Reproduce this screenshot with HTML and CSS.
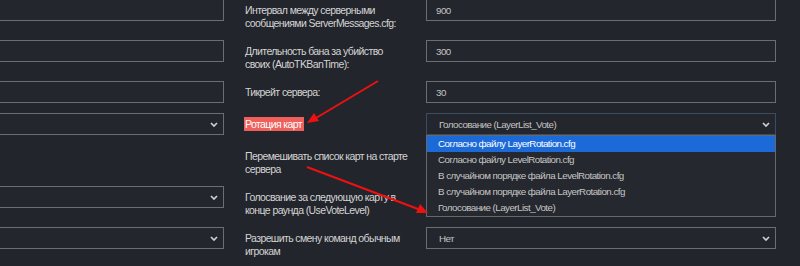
FILE: index.html
```html
<!DOCTYPE html>
<html lang="ru">
<head>
<meta charset="utf-8">
<title>Настройки сервера</title>
<link rel="stylesheet" href="styles.css">
</head>
<body>
<div class="page">
  <div class="form">
    <div class="row">
      <div class="cell-left"><div class="field"></div></div>
      <div class="label">Интервал между серверными<br>сообщениями ServerMessages.cfg:</div>
      <div class="cell-right"><div class="field">900</div></div>
    </div>
    <div class="row">
      <div class="cell-left"><div class="field"></div></div>
      <div class="label">Длительность бана за убийство<br>своих (AutoTKBanTime):</div>
      <div class="cell-right"><div class="field">300</div></div>
    </div>
    <div class="row">
      <div class="cell-left"><div class="field"></div></div>
      <div class="label">Тикрейт сервера:</div>
      <div class="cell-right"><div class="field">30</div></div>
    </div>
    <div class="row">
      <div class="cell-left"><div class="field select"><span></span><svg class="chev" viewBox="0 0 8 5"><path d="M1 1 L4 4 L7 1"/></svg></div></div>
      <div class="label"><span class="mark">Ротация карт</span></div>
      <div class="cell-right dd-host">
        <div class="field select focused"><span>Голосование (LayerList_Vote)</span><svg class="chev" viewBox="0 0 8 5"><path d="M1 1 L4 4 L7 1"/></svg></div>
        <ul class="dropdown">
          <li class="active">Согласно файлу LayerRotation.cfg</li>
          <li>Согласно файлу LevelRotation.cfg</li>
          <li>В случайном порядке файла LevelRotation.cfg</li>
          <li>В случайном порядке файла LayerRotation.cfg</li>
          <li>Голосование (LayerList_Vote)</li>
        </ul>
      </div>
    </div>
    <div class="row">
      <div class="cell-left"></div>
      <div class="label">Перемешивать список карт на старте<br>сервера</div>
      <div class="cell-right"></div>
    </div>
    <div class="row">
      <div class="cell-left"><div class="field select"><span></span><svg class="chev" viewBox="0 0 8 5"><path d="M1 1 L4 4 L7 1"/></svg></div></div>
      <div class="label">Голосвание за следующую карту в<br>конце раунда (UseVoteLevel)</div>
      <div class="cell-right"><div class="field select"><span></span></div></div>
    </div>
    <div class="row">
      <div class="cell-left"><div class="field select"><span></span><svg class="chev" viewBox="0 0 8 5"><path d="M1 1 L4 4 L7 1"/></svg></div></div>
      <div class="label">Разрешить смену команд обычным<br>игрокам</div>
      <div class="cell-right"><div class="field select"><span>Нет</span><svg class="chev" viewBox="0 0 8 5"><path d="M1 1 L4 4 L7 1"/></svg></div></div>
    </div>
  </div>
  <svg class="arrows" viewBox="0 0 800 266" width="800" height="266">
    <line x1="378" y1="81" x2="316" y2="118" />
    <polygon points="307,123 314,113 319,121" />
    <line x1="307" y1="167" x2="418" y2="209" />
    <polygon points="428,213 416,213 420,204" />
  </svg>
</div>
</body>
</html>
```
FILE: styles.css
```css
html, body {
  margin: 0;
  padding: 0;
  background: #22252b;
  overflow: hidden;
}
.page {
  position: relative;
  width: 800px;
  height: 266px;
  overflow: hidden;
  font-family: "Liberation Sans", Arial, sans-serif;
  font-size: 10.5px;
  letter-spacing: -0.6px;
  color: #d2d2d2;
}
.form {
  margin-top: -1px;
}
.row {
  display: grid;
  grid-template-columns: 224px 165px 345px;
  column-gap: 21px;
  margin-bottom: 10px;
  align-items: start;
}
.row .label {
  padding-top: 5px;
  line-height: 13px;
  color: #d4d4d4;
  white-space: nowrap;
}
.row .cell-right {
  margin-left: -5px;
}
.cell-left .field {
  margin-left: -30px;
}
.field {
  height: 22px;
  box-sizing: border-box;
  border: 1px solid #6c6d70;
  background: #23262c;
  color: #c4c4c4;
  padding: 0 9px;
  display: flex;
  align-items: center;
  line-height: 13px;
  font-size: 9.8px;
  letter-spacing: -0.55px;
}
.field.select {
  padding: 0 5px 0 12px;
  justify-content: space-between;
}
.field.focused {
  border-color: #3b4d60;
}
.chev {
  width: 8px;
  height: 5px;
  fill: none;
  stroke: #d0d0d0;
  stroke-width: 1.7;
}
.mark {
  display: inline-block;
  background: #ef605c;
  color: #ffffff;
  line-height: 14px;
  margin: -1px 0 0 -1px;
  padding: 0 2px 0 1px;
}
.dd-host {
  position: relative;
}
.dropdown {
  position: absolute;
  top: 22px;
  left: 0;
  right: 0;
  margin: 0;
  padding: 0;
  list-style: none;
  background: #25282e;
  border: 1px solid #66686c;
  z-index: 2;
  font-size: 9.8px;
  letter-spacing: -0.55px;
}
.dropdown li {
  height: 16px;
  line-height: 16px;
  padding-left: 11px;
  color: #c6c6c6;
}
.dropdown li.active {
  background: #1c6ad8;
  color: #ffffff;
}
.arrows {
  position: absolute;
  left: 0;
  top: 0;
  z-index: 3;
  pointer-events: none;
}
.arrows line {
  stroke: #ee1111;
  stroke-width: 2;
}
.arrows polygon {
  fill: #ee1111;
}
```
